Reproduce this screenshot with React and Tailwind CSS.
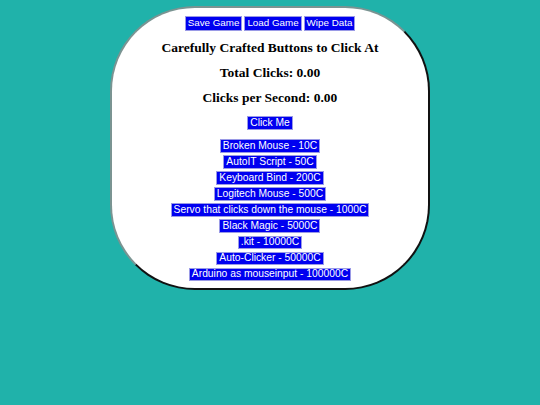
import React from 'react';

const upgrades = [
  'Broken Mouse - 10C',
  'AutoIT Script - 50C',
  'Keyboard Bind - 200C',
  'Logitech Mouse - 500C',
  'Servo that clicks down the mouse - 1000C',
  'Black Magic - 5000C',
  '.kit - 10000C',
  'Auto-Clicker - 50000C',
  'Arduino as mouseinput - 100000C',
];

function BlueButton({ children, className = '' }) {
  return (
    <button
      className={`bg-[#0000f0] border border-[#9a9ae6] text-white leading-none px-[2px] whitespace-nowrap ${className}`}
      style={{ fontFamily: '"Liberation Sans", Arial, sans-serif' }}
    >
      {children}
    </button>
  );
}

export default function App() {
  return (
    <div className="w-[540px] h-[405px] bg-[#20b2aa] overflow-hidden pt-[6px]">
      <div className="mx-auto box-border w-[320px] h-[284px] bg-white rounded-[85px] border-2 border-t-[#7a9492] border-l-[#7a9492] border-r-[#111] border-b-[#111] pt-[8px] flex flex-col items-center">
        {/* Save / Load / Wipe */}
        <div className="flex gap-[2px]">
          <BlueButton className="text-[9.8px] h-[14.5px]">Save Game</BlueButton>
          <BlueButton className="text-[9.8px] h-[14.5px]">Load Game</BlueButton>
          <BlueButton className="text-[9.8px] h-[14.5px]">Wipe Data</BlueButton>
        </div>

        <div
          className="flex flex-col items-center font-bold text-[13.5px] leading-[17px] text-black"
          style={{ fontFamily: '"Liberation Serif", "Times New Roman", serif' }}
        >
          <h3 className="mt-[8.5px]">Carefully Crafted Buttons to Click At</h3>
          <h3 className="mt-[8px]">Total Clicks: 0.00</h3>
          <h3 className="mt-[8px]">Clicks per Second: 0.00</h3>
        </div>

        <BlueButton className="mt-[10px] text-[10.3px] h-[13.5px]">Click Me</BlueButton>

        <div className="mt-[9.5px] flex flex-col items-center gap-[2.6px]">
          {upgrades.map(u => (
            <BlueButton key={u} className="text-[10.3px] h-[13.5px]">{u}</BlueButton>
          ))}
        </div>
      </div>
    </div>
  );
}
